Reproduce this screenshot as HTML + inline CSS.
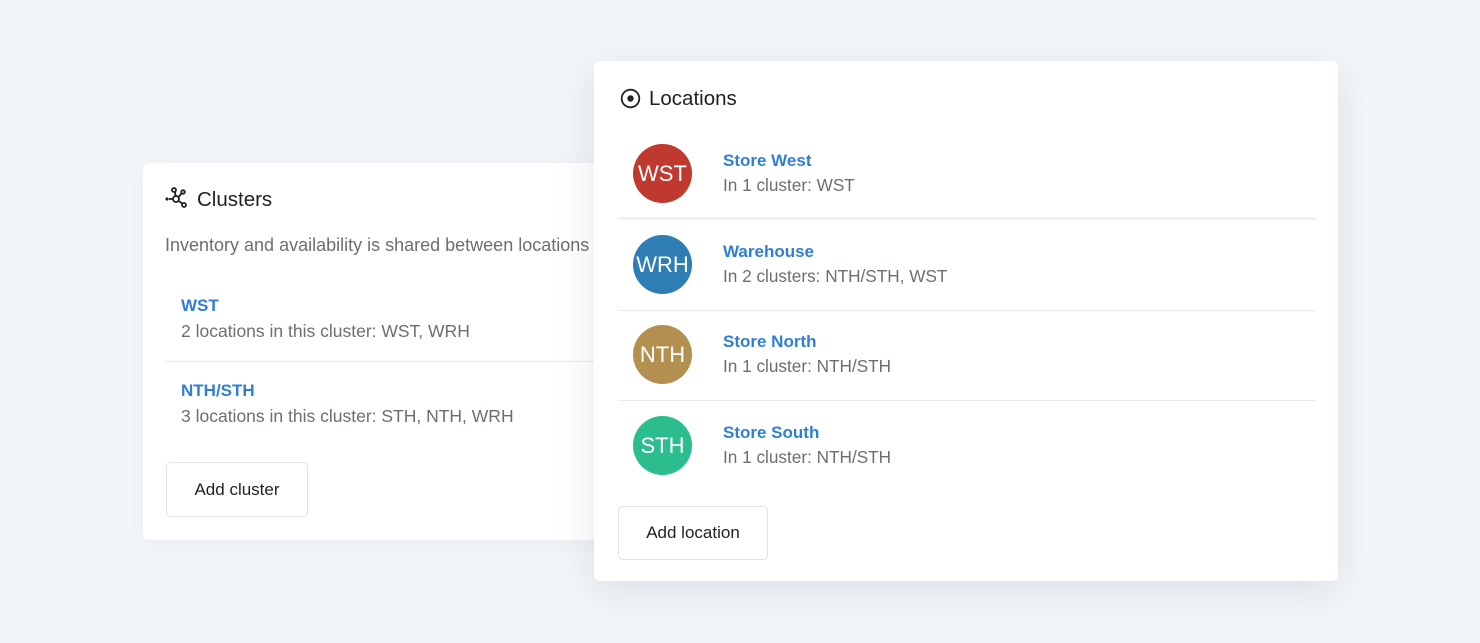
<!DOCTYPE html>
<html><head><style>
body{margin:0;width:1480px;height:643px;background:#f2f5f9;font-family:"Liberation Sans",sans-serif;position:relative;overflow:hidden}
.card{position:absolute;background:#fff;border-radius:6px}
.c1{left:143px;top:163px;width:470px;height:377px;box-shadow:0 4px 20px rgba(0,0,0,.04)}
.c2{left:594px;top:61px;width:744px;height:520px;box-shadow:0 10px 40px rgba(30,40,60,.10)}
.t{position:absolute;font-size:20.5px;color:#1f2023}
.link{position:absolute;color:#2f7fd6;font-weight:bold;font-size:17px}
.sub{position:absolute;color:#6b6e73;font-size:17.5px}
.c2s{font-size:17.2px}
.btn{position:absolute;border:1px solid #dfe2e6;border-radius:5px;background:#fff;font-size:17px;color:#1f2023;display:flex;align-items:center;justify-content:center}
.av{position:absolute;left:633px;width:59px;height:59px;border-radius:50%;color:#fff;font-size:22px;display:flex;align-items:center;justify-content:center}
.hr{position:absolute;height:1px;background:#e8eaed}
</style></head><body>
<div class="card c1"></div>
<svg style="position:absolute;left:165px;top:187px" width="27" height="22" viewBox="0 0 27 22" fill="none" stroke="#222" stroke-width="1.8"><circle cx="2" cy="12" r="1.6" fill="#222" stroke="none"/><circle cx="11" cy="12" r="3"/><circle cx="9" cy="3" r="2"/><circle cx="18" cy="5" r="1.8"/><circle cx="19" cy="18" r="2"/><line x1="4" y1="12" x2="8" y2="12"/><line x1="10" y1="5" x2="10.5" y2="9"/><line x1="13.5" y1="10" x2="16.5" y2="6.5"/><line x1="13.5" y1="14" x2="17.5" y2="16.5"/></svg>
<div class="t" style="left:197px;top:188px">Clusters</div>
<div class="sub" style="left:165px;top:235px;font-size:18px">Inventory and availability is shared between locations</div>
<div class="link" style="left:181px;top:296px">WST</div>
<div class="sub" style="left:181px;top:321px">2 locations in this cluster: WST, WRH</div>
<div class="hr" style="left:165px;top:361px;width:430px"></div>
<div class="link" style="left:181px;top:381px">NTH/STH</div>
<div class="sub" style="left:181px;top:406px">3 locations in this cluster: STH, NTH, WRH</div>
<div class="btn" style="left:166px;top:462px;width:140px;height:53px">Add cluster</div>

<div class="card c2"></div>
<svg style="position:absolute;left:620px;top:88px" width="21" height="21" viewBox="0 0 21 21"><circle cx="10.5" cy="10.5" r="8.8" fill="none" stroke="#222" stroke-width="1.8"/><circle cx="10.5" cy="10.5" r="3.2" fill="#222"/></svg>
<div class="t" style="left:649px;top:87px">Locations</div>

<div class="av" style="top:144px;background:#c0392e">WST</div>
<div class="link" style="left:723px;top:151px">Store West</div>
<div class="sub c2s" style="left:723px;top:175px">In 1 cluster: WST</div>
<div class="hr" style="left:618px;top:217px;width:698px;height:3px;background:#f0f2f4"></div>
<div class="av" style="top:235px;background:#2f7db5">WRH</div>
<div class="link" style="left:723px;top:242px">Warehouse</div>
<div class="sub c2s" style="left:723px;top:266px">In 2 clusters: NTH/STH, WST</div>
<div class="hr" style="left:618px;top:310px;width:698px"></div>
<div class="av" style="top:325px;background:#b3904f">NTH</div>
<div class="link" style="left:723px;top:332px">Store North</div>
<div class="sub c2s" style="left:723px;top:356px">In 1 cluster: NTH/STH</div>
<div class="hr" style="left:618px;top:400px;width:698px"></div>
<div class="av" style="top:416px;background:#2bbd8e">STH</div>
<div class="link" style="left:723px;top:423px">Store South</div>
<div class="sub c2s" style="left:723px;top:447px">In 1 cluster: NTH/STH</div>
<div class="btn" style="left:618px;top:506px;width:148px;height:52px">Add location</div>
</body></html>
